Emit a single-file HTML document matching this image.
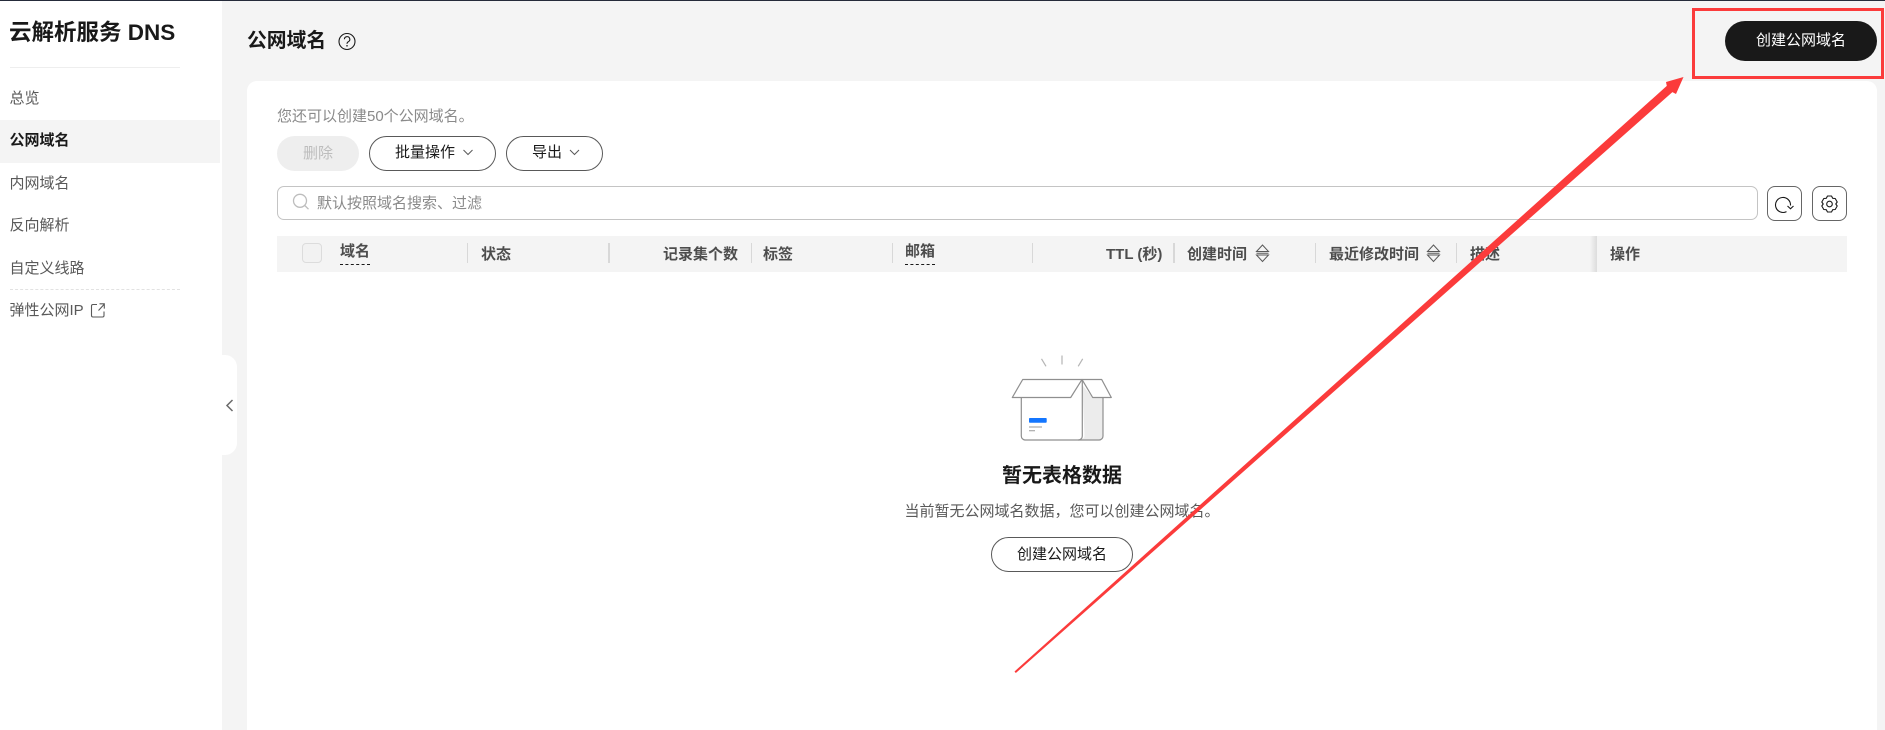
<!DOCTYPE html>
<html lang="zh-CN">
<head>
<meta charset="utf-8">
<title>公网域名</title>
<style>
html,body{margin:0;padding:0;width:1885px;height:730px;overflow:hidden;background:#f4f4f4}
body{position:relative;font-family:"Liberation Sans","Noto Sans CJK SC",sans-serif;font-size:15px;color:#191919}
.a{position:absolute;box-sizing:border-box}
.t{position:absolute;white-space:nowrap;line-height:20px;height:20px}
.g{color:#595959}
.h{color:#4d4d4d;font-weight:700;font-size:15px}
.sep{position:absolute;top:243px;width:1px;height:20px;background:#d8d8d8}
.btn{position:absolute;box-sizing:border-box;border:1px solid #595959;border-radius:18px;background:#fff}
svg{position:absolute;overflow:visible}
</style>
</head>
<body>
<div class="a" style="left:0;top:0;width:1885px;height:1px;background:#252b3a"></div>

<!-- sidebar -->
<div class="a" style="left:0;top:1px;width:222px;height:729px;background:#fff"></div>
<div class="t" style="left:9px;top:21px;height:24px;line-height:24px;font-size:22.500px;font-weight:700">云解析服务 DNS</div>
<div class="a" style="left:10px;top:67px;width:170px;height:1px;background:#eee"></div>
<div class="t g" style="left:9.500px;top:89px">总览</div>
<div class="a" style="left:0;top:120px;width:220px;height:43px;background:#f4f4f4"></div>
<div class="t" style="left:9.500px;top:131px;font-weight:700">公网域名</div>
<div class="t g" style="left:9.500px;top:174px">内网域名</div>
<div class="t g" style="left:9.500px;top:216px">反向解析</div>
<div class="t g" style="left:9.500px;top:259px">自定义线路</div>
<div class="a" style="left:10px;top:289px;width:170px;height:0;border-top:1px dashed #e2e2e2"></div>
<div class="t g" style="left:9.500px;top:301px">弹性公网IP</div>
<svg style="left:0;top:0" width="120" height="330"><path d="M97 304.500H93a1.500 1.500 0 0 0-1.500 1.500v9.500a1.500 1.500 0 0 0 1.500 1.500h9.500a1.500 1.500 0 0 0 1.500-1.500v-4M98.500 310.500l5.500-6M99.500 303.800h4.800v4.800" fill="none" stroke="#595959" stroke-width="1.100"/></svg>
<!-- collapse handle -->
<div class="a" style="left:210px;top:355px;width:27px;height:100px;background:#fff;border-radius:0 12px 12px 0"></div>
<svg style="left:0;top:0" width="240" height="420"><path d="M232.500 400l-5.500 5.500 5.500 5.500" fill="none" stroke="#6a6a6a" stroke-width="1.500"/></svg>

<!-- header -->
<div class="t" style="left:247px;top:30px;height:22px;line-height:22px;font-size:19.800px;font-weight:700">公网域名</div>
<svg style="left:0;top:0" width="360" height="60"><circle cx="347" cy="41.500" r="8" fill="none" stroke="#191919" stroke-width="1.100"/><path d="M344.400 39.300a2.700 2.700 0 1 1 4 2.400c-.9.500-1.400 1-1.400 2" fill="none" stroke="#191919" stroke-width="1.100"/><circle cx="347" cy="45.800" r=".8" fill="#191919"/></svg>
<div class="a" style="left:1725px;top:21px;width:152px;height:40px;border-radius:20px;background:#191919;color:#fff;text-align:center;line-height:40px">创建公网域名</div>

<!-- card -->
<div class="a" style="left:247px;top:81px;width:1630px;height:660px;background:#fff;border-radius:10px"></div>
<div class="t" style="left:277px;top:107px;color:#8a8a8a">您还可以创建50个公网域名。</div>

<div class="a" style="left:277px;top:136px;width:82px;height:35px;border-radius:18px;background:#eee;color:#bdbdbd;text-align:center;line-height:35px">删除</div>
<div class="btn" style="left:369px;top:136px;width:127px;height:35px"></div>
<div class="t" style="left:395px;top:143px">批量操作</div>
<div class="btn" style="left:506px;top:136px;width:97px;height:35px"></div>
<div class="t" style="left:532px;top:143px">导出</div>
<svg style="left:0;top:0" width="600" height="170"><path d="M463.500 150l4.500 4.500 4.500-4.500M570 150l4.500 4.500 4.500-4.500" fill="none" stroke="#595959" stroke-width="1"/></svg>

<!-- search -->
<div class="a" style="left:277px;top:186px;width:1481px;height:34px;border:1px solid #c4c4c4;border-radius:7px"></div>
<svg style="left:0;top:0" width="320" height="215"><circle cx="300" cy="200.800" r="6.500" fill="none" stroke="#bdbdbd" stroke-width="1.300"/><path d="M304.800 205.500l3.700 3.700" stroke="#bdbdbd" stroke-width="1.300"/></svg>
<div class="t" style="left:317px;top:194px;color:#8a8a8a">默认按照域名搜索、过滤</div>
<div class="a" style="left:1767px;top:186px;width:35px;height:35px;border:1px solid #666;border-radius:8px"></div>
<div class="a" style="left:1812px;top:186px;width:35px;height:35px;border:1px solid #666;border-radius:8px"></div>
<svg style="left:0;top:0" width="1850" height="225">
<path d="M1786.500 211.600A7.500 7.500 0 1 1 1790.500 205.500" fill="none" stroke="#191919" stroke-width="1.100"/>
<path d="M1787.500 206l3 2.800 3-2.800" fill="none" stroke="#191919" stroke-width="1.100"/>
<path d="M1827.500 196h4l1.200 2.300 2.500 .2 2 3.500-1.400 2 1.400 2-2 3.500-2.500 .2-1.200 2.300h-4l-1.200-2.300-2.500-.2-2-3.500 1.400-2-1.400-2 2-3.500 2.500-.2z" fill="none" stroke="#191919" stroke-width="1.100" stroke-linejoin="round"/>
<circle cx="1829.500" cy="204" r="2.800" fill="none" stroke="#191919" stroke-width="1.100"/>
</svg>

<!-- table head -->
<div class="a" style="left:277px;top:236px;width:1570px;height:36px;background:#f4f4f4"></div>
<div class="a" style="left:302px;top:243px;width:20px;height:20px;border:1px solid #dcdcdc;border-radius:4px;background:#f2f2f2"></div>
<div class="t h" style="left:340px;top:241.500px">域名</div>
<div class="a" style="left:340px;top:264px;width:30px;height:0;border-top:1px dashed #191919"></div>
<div class="sep" style="left:467px"></div>
<div class="t h" style="left:481px;top:244.500px">状态</div>
<div class="sep" style="left:608px;width:2px"></div>
<div class="t h" style="left:663px;top:244.500px">记录集个数</div>
<div class="sep" style="left:751px"></div>
<div class="t h" style="left:763px;top:244.500px">标签</div>
<div class="sep" style="left:892px"></div>
<div class="t h" style="left:905px;top:241.500px">邮箱</div>
<div class="a" style="left:905px;top:264px;width:30px;height:0;border-top:1px dashed #191919"></div>
<div class="sep" style="left:1032px"></div>
<div class="t h" style="left:1106px;top:244.500px">TTL (秒)</div>
<div class="sep" style="left:1173px;width:2px"></div>
<div class="t h" style="left:1187px;top:244.500px">创建时间</div>
<div class="sep" style="left:1315px"></div>
<div class="t h" style="left:1329px;top:244.500px">最近修改时间</div>
<div class="sep" style="left:1456px"></div>
<div class="t h" style="left:1470px;top:244.500px">描述</div>
<div class="a" style="left:1590px;top:236px;width:7px;height:36px;background:linear-gradient(to right,#f4f4f4,#dcdcdc)"></div>
<div class="t h" style="left:1610px;top:244.500px">操作</div>
<svg style="left:0;top:0" width="1450" height="270">
<path d="M1256.500 251.500l6-6.500 6 6.500zM1256.500 255l6 6.500 6-6.500zM1256.500 253.300h12" fill="none" stroke="#595959" stroke-width="1"/>
<path d="M1427.500 251.500l6-6.500 6 6.500zM1427.500 255l6 6.500 6-6.500zM1427.500 253.300h12" fill="none" stroke="#595959" stroke-width="1"/>
</svg>

<!-- empty state -->
<svg style="left:0;top:0" width="1885" height="450">
<path d="M1041.500 358.800l4.500 7.500M1062 355.500v9M1082.700 358.800l-4.500 7.500" stroke="#b5b5b5" stroke-width="1.200" fill="none"/>
<path d="M1082.300 385l10 12.300h10.700v38.700a4 4 0 0 1-4 4h-21l6-2 .5-2z" fill="#ececec"/>
<path d="M1021.300 397.300v38.700a4 4 0 0 0 4 4h73.700a4 4 0 0 0 4-4v-38.700" fill="none" stroke="#8f8f8f" stroke-width="1.200"/>
<path d="M1082.300 379.800v56.200a4 4 0 0 1-4 4" fill="none" stroke="#8f8f8f" stroke-width="1.200"/>
<path d="M1022.700 379.500h59.300l-11.300 18h-58.400z" fill="#fff" stroke="#8f8f8f" stroke-width="1.200" stroke-linejoin="round"/>
<path d="M1082 379.500h19.700l9.600 18h-18.600z" fill="#fff" stroke="#8f8f8f" stroke-width="1.200" stroke-linejoin="round"/>
<rect x="1029" y="418" width="17.700" height="4.700" rx=".8" fill="#1476ff"/>
<path d="M1029 427h13M1029 430.800h6" stroke="#9a9a9a" stroke-width="1"/>
</svg>
<div class="t" style="left:1002px;top:464px;height:24px;line-height:24px;font-size:20px;font-weight:700">暂无表格数据</div>
<div class="t g" style="left:904.500px;top:502px">当前暂无公网域名数据，您可以创建公网域名。</div>
<div class="btn" style="left:991px;top:537px;width:142px;height:35px;text-align:center;line-height:34px;color:#191919">创建公网域名</div>

<!-- annotation -->
<div class="a" style="left:1692px;top:8px;width:192px;height:71px;border:3px solid #fb3b3b"></div>
<svg style="left:0;top:0" width="1885" height="730">
<polygon points="1014.500,671.500 1015.800,673 1672.400,92.100 1676,94 1683.500,77 1666,82 1666.800,85.900" fill="#fb3b3b"/>
</svg>
</body>
</html>
